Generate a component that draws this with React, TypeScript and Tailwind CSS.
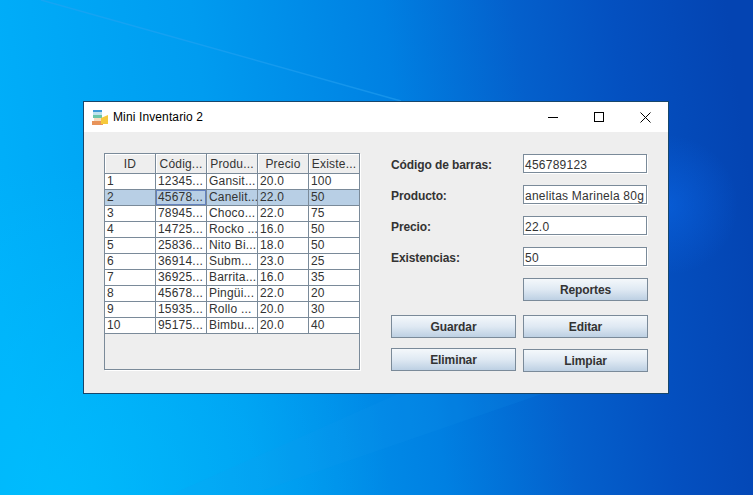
const columns = ['ID', 'Códig...', 'Produ...', 'Precio', 'Existe...'];

const rows = [
  ['1', '12345...', 'Gansit...', '20.0', '100'],
  ['2', '45678...', 'Canelit...', '22.0', '50'],
  ['3', '78945...', 'Choco...', '22.0', '75'],
  ['4', '14725...', 'Rocko ...', '16.0', '50'],
  ['5', '25836...', 'Nito Bi...', '18.0', '50'],
  ['6', '36914...', 'Subm...', '23.0', '25'],
  ['7', '36925...', 'Barrita...', '16.0', '35'],
  ['8', '45678...', 'Pingüi...', '22.0', '20'],
  ['9', '15935...', 'Rollo ...', '20.0', '30'],
  ['10', '95175...', 'Bimbu...', '20.0', '40'],
];

const fields = [
  { label: 'Código de barras:', value: '456789123' },
  { label: 'Producto:', value: 'anelitas Marinela 80g' },
  { label: 'Precio:', value: '22.0' },
  { label: 'Existencias:', value: '50' },
];

const Wallpaper = () => (
  <svg className="absolute inset-0 h-full w-full" viewBox="0 0 753 495" preserveAspectRatio="none">
    <defs>
      <linearGradient id="wall" gradientUnits="userSpaceOnUse" x1="0" y1="300" x2="753" y2="200">
        <stop offset="0" stopColor="#00b0fa" />
        <stop offset="0.3" stopColor="#009cf0" />
        <stop offset="0.55" stopColor="#0080e2" />
        <stop offset="0.72" stopColor="#0460cc" />
        <stop offset="0.85" stopColor="#0450c0" />
        <stop offset="1" stopColor="#0444b2" />
      </linearGradient>
      <radialGradient id="glow" gradientUnits="userSpaceOnUse" cx="668" cy="205" r="70">
        <stop offset="0" stopColor="#0c6cf0" stopOpacity="0.45" />
        <stop offset="1" stopColor="#0c6cf0" stopOpacity="0" />
      </radialGradient>
      <radialGradient id="fade" gradientUnits="userSpaceOnUse" cx="60" cy="495" r="330">
        <stop offset="0" stopColor="#00c4ff" stopOpacity="0.6" />
        <stop offset="1" stopColor="#00c4ff" stopOpacity="0" />
      </radialGradient>
    </defs>
    <rect width="753" height="495" fill="url(#wall)" />
    <rect width="753" height="495" fill="url(#fade)" />
    <rect width="753" height="495" fill="url(#glow)" />
    <line x1="41" y1="0" x2="401" y2="101" stroke="#2aa4f2" strokeWidth="1.5" opacity="0.5" />
    <polygon points="400,393 545,393 250,495 170,495" fill="#1a9cf2" opacity="0.12" />
  </svg>
);

const AppIcon = () => (
  <svg width="17" height="17" viewBox="0 0 17 17">
    <rect x="1" y="1" width="9" height="2" fill="#3f9bd8" />
    <rect x="1" y="3" width="9" height="3" fill="#bfe3ee" />
    <rect x="1" y="6" width="9" height="3" fill="#6cc6a8" />
    <rect x="0" y="12" width="11" height="4" fill="#e8935a" />
    <rect x="2" y="9" width="7" height="3" fill="#f6dcc0" />
    <polygon points="9,9 16,6 16,15 9,15" fill="#f6c93c" />
  </svg>
);

const Button = ({ label, className = '' }: { label: string; className?: string }) => (
  <button className={`h-[23px] w-[125px] border border-[#7a8a99] bg-gradient-to-b from-[#f4f8fb] via-[#dfe9f3] to-[#bdd0e3] text-xs font-bold tracking-[-0.1px] text-[#333333] ${className}`}>
    {label}
  </button>
);

export default function App() {
  return (
    <div className="relative h-[495px] w-[753px] overflow-hidden font-['Liberation_Sans',Arial,sans-serif]">
      <Wallpaper />
      <div className="relative pl-[83px] pt-[101px]">
        <div className="h-[293px] w-[586px] border border-[#17466b] bg-[#eeeeee]">
          {/* title bar */}
          <div className="flex h-[30px] items-center bg-white">
            <div className="ml-2 flex items-center gap-[4px]">
              <AppIcon />
              <span className="text-xs tracking-[0.12px] text-black">Mini Inventario 2</span>
            </div>
            <div className="ml-auto flex h-full">
              <div className="flex w-[46px] items-center justify-center">
                <div className="h-px w-[10px] bg-black" />
              </div>
              <div className="flex w-[46px] items-center justify-center">
                <div className="h-[10px] w-[10px] border border-black" />
              </div>
              <div className="flex w-[46px] items-center justify-center">
                <svg width="11" height="11" viewBox="0 0 11 11" stroke="#000" strokeWidth="1">
                  <path d="M0.5 0.5 L10.5 10.5 M10.5 0.5 L0.5 10.5" />
                </svg>
              </div>
            </div>
          </div>

          <div className="flex pl-5 pt-[21px]">
            {/* table */}
            <div className="h-[217px] w-[256px] border border-[#7a8a99] text-xs tracking-[0.2px] text-[#333333] shadow-[1px_1px_0_#ffffff]">
              <div className="grid grid-cols-[51px_51px_51px_51px_51px]">
                {columns.map((col) => (
                  <div
                    key={col}
                    className="flex h-5 items-center justify-center overflow-hidden whitespace-nowrap border-b border-r border-[#7a8a99] bg-[#eeeeee] pt-px shadow-[inset_1px_1px_0_#ffffff]"
                  >
                    {col}
                  </div>
                ))}
                {rows.map((row) =>
                  row.map((cell, i) => {
                    const selected = row[0] === '2';
                    const focused = selected && i === 1;
                    return (
                      <div
                        key={row[0] + i}
                        className={`h-4 overflow-hidden whitespace-nowrap border-b border-r border-[#7a8a99] pl-[2px] leading-[15px] ${selected ? 'bg-[#b8cfe5]' : 'bg-white'} ${focused ? 'shadow-[inset_0_0_0_1px_#6382bf]' : ''}`}
                      >
                        {cell}
                      </div>
                    );
                  }),
                )}
              </div>
            </div>

            {/* form */}
            <div className="ml-[31px] w-[257px]">
              <div className="flex flex-col gap-3 pt-px">
                {fields.map((f) => (
                  <div key={f.label} className="flex h-[19px] items-center">
                    <span className="w-[132px] pt-[3px] text-xs font-bold tracking-[-0.1px] text-[#333333]">{f.label}</span>
                    <div className="flex h-[19px] w-[124px] items-center overflow-hidden whitespace-nowrap border border-[#7a8a99] bg-white pl-[1px] pt-[2px] text-xs tracking-[0.24px] text-[#333333] shadow-[1px_1px_0_#ffffff]">
                      {f.value}
                    </div>
                  </div>
                ))}
              </div>
              <div className="mt-3 flex justify-end">
                <Button label="Reportes" />
              </div>
              <div className="mt-[14px] grid grid-cols-[125px_125px] justify-between">
                <Button label="Guardar" />
                <Button label="Editar" />
              </div>
              <div className="mt-[10px] grid grid-cols-[125px_125px] justify-between">
                <Button label="Eliminar" />
                <Button label="Limpiar" className="mt-px" />
              </div>
            </div>
          </div>
        </div>
      </div>
    </div>
  );
}
